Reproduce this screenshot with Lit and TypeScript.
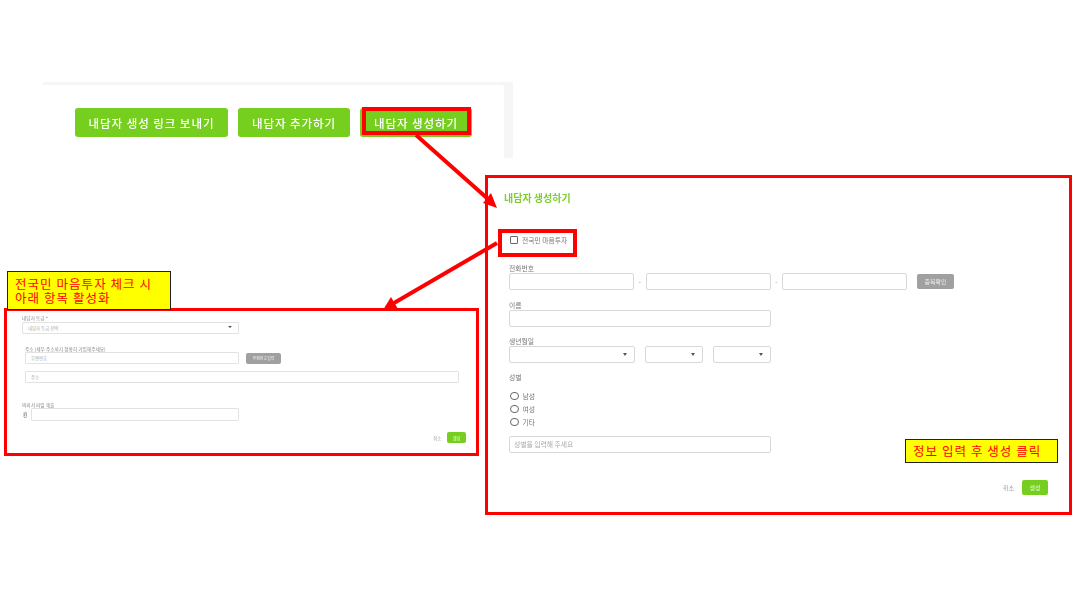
import { LitElement, html, css, svg } from "lit";
import { customElement } from "lit/decorators.js";

@customElement("app-root")
export class AppRoot extends LitElement {
  static styles = css`
    :host { display: block; position: relative; width: 1080px; height: 608px; overflow: hidden; background: #fff;
      font-family: "Noto Sans CJK KR", "Noto Sans", sans-serif; color: #777; }
    * { box-sizing: border-box; }
    .shot { position: absolute; left: 43px; top: 82px; width: 470px; height: 76px; background: #f6f6f6; padding: 3px 9px 0 0; filter: blur(0.3px); }
    .shot-in { height: 100%; background: #fff; border-top-right-radius: 3px; display: flex; gap: 10px; padding: 23px 0 0 32px; align-items: flex-start; }
    .gbtn { height: 29px; background: #76cf1f; border-radius: 3px; color: #fff; font-size: 11.5px; font-weight: 500; letter-spacing: 0.95px;
      display: flex; align-items: center; justify-content: center; }
    .g1 { width: 153px; } .g2 { width: 112px; } .g3 { width: 112px; }
    .redbox { position: absolute; border: 4px solid #f00; }
    .rb1 { left: 362px; top: 107px; width: 109px; height: 28px; }
    .rb2 { left: 498px; top: 229px; width: 79px; height: 28px; }
    .frame { position: absolute; border: 3px solid #f00; background: #fff; }
    .fr { left: 485px; top: 175px; width: 587px; height: 340px; }
    .fl { left: 4px; top: 308px; width: 475px; height: 148px; }
    .body { position: relative; height: 100%; filter: blur(0.4px); }
    .fr .body { padding: 13px 0 0 16px; }
    .fl .body { padding: 4px 0 0 15px; }
    .title { color: #7ccf30; font-size: 10px; font-weight: 700; line-height: 14px; }
    .form { padding-left: 5px; }
    .row { display: flex; align-items: center; }
    .check { margin-top: 30px; padding-left: 1px; height: 10px; gap: 4px; font-size: 6.8px; color: #777; }
    .box { width: 8px; height: 8px; border: 1px solid #666; border-radius: 1px; }
    .lab { display: block; font-size: 6.8px; line-height: 8px; color: #777; }
    .mt1 { margin-top: 19px; } .mt2 { margin-top: 11px; } .mt3 { margin-top: 10px; }
    .inp { display: block; border: 1px solid #d8d8d8; border-radius: 2px; background: #fff; height: 17px; margin-top: 1px; position: relative;
      font-size: 6.8px; color: #aaa; padding-left: 4px; line-height: 15px; }
    .w125 { width: 125px; } .w262 { width: 262px; } .w126 { width: 126px; } .w58 { width: 58px; }
    .dash { width: 11.5px; text-align: center; font-size: 6px; color: #888; }
    .sp10 { margin-left: 10px; }
    .sel::after { content: ""; position: absolute; right: 7px; top: 6px; border: 2.5px solid transparent; border-top: 3px solid #555; }
    .grey { background: #a0a0a0; color: #eee; border-radius: 2px; font-size: 6px; display: flex; align-items: center; justify-content: center; }
    .dup { width: 37px; height: 15px; margin-left: 10px; }
    .radios { margin-top: 10px; display: flex; flex-direction: column; gap: 3.5px; }
    .radio { gap: 4px; font-size: 6.8px; height: 9.5px; padding-left: 1px; }
    .circle { width: 8.5px; height: 8.5px; border: 1px solid #666; border-radius: 50%; }
    .gender { margin-top: 9px; }
    .foot { position: absolute; display: flex; align-items: center; }
    .foot-r { right: 21px; bottom: 17px; gap: 8px; font-size: 6px; color: #999; }
    .sbtn { background: #76cf1f; color: #e8f8d8; border-radius: 2px; display: flex; align-items: center; justify-content: center; }
    .foot-r .sbtn { width: 26px; height: 15px; font-size: 6px; }
    .foot-l { right: 10px; bottom: 10px; gap: 6px; font-size: 4.2px; color: #999; }
    .foot-l .sbtn { width: 19px; height: 11px; font-size: 4.2px; }
    .note { position: absolute; background: #ff0; border: 1px solid #222; color: #f00; font-size: 12.5px; letter-spacing: 1.05px; line-height: 14px; }
    .n1 { left: 7px; top: 271px; width: 164px; height: 39px; padding: 5px 0 0 7px; }
    .n2 { left: 905px; top: 439px; width: 153px; height: 24px; padding: 4px 0 0 7px; }
    .s { font-size: 4.7px; line-height: 6px; color: #888; }
    .s i { color: #e33; font-style: normal; }
    .si { border: 1px solid #e2e2e2; border-radius: 1px; height: 12px; background: #fff; font-size: 4.4px; line-height: 10px; color: #aaa; padding-left: 5px; position: relative; }
    .si.sel::after { right: 6px; top: 3px; border-width: 2px; border-top-width: 2.5px; }
    .w217 { width: 217px; }
    .addr { padding-left: 3px; }
    .w214 { width: 214px; } .w434 { width: 434px; } .w208 { width: 208px; height: 13px; }
    .zip { width: 35px; height: 11px; margin-left: 7px; font-size: 4px; }
    .clip { width: 9px; height: 8px; flex: none; }
    .arrows { position: absolute; left: 0; top: 0; width: 1080px; height: 608px; pointer-events: none; }
  `;

  render() {
    return html`
      <div class="shot"><div class="shot-in">
        <div class="gbtn g1">내담자 생성 링크 보내기</div>
        <div class="gbtn g2">내담자 추가하기</div>
        <div class="gbtn g3">내담자 생성하기</div>
      </div></div>

      <section class="frame fl"><div class="body">
        <div class="s">내담자 등급 <i>*</i></div>
        <div class="si sel w217" style="margin-top:1px">내담자 등급 선택</div>
        <div class="addr">
          <div class="s" style="margin-top:12px">주소 (세부 주소까지 정확히 기입해주세요)</div>
          <div class="row"><div class="si w214">우편번호</div><div class="grey zip">우편번호입력</div></div>
          <div class="si w434" style="margin-top:7px">주소</div>
        </div>
        <div class="s" style="margin-top:19px">의뢰서 파일 제출</div>
        <div class="row">
          <svg class="clip" viewBox="0 0 9 8"><path d="M2 1.5v4a1.2 1.2 0 0 0 2.4 0V2a.8.8 0 0 0-1.6 0v3" fill="none" stroke="#888" stroke-width=".7"/></svg>
          <div class="si w208"></div>
        </div>
        <div class="foot foot-l"><span>취소</span><div class="sbtn">생성</div></div>
      </div></section>

      <section class="frame fr"><div class="body">
        <div class="title">내담자 생성하기</div>
        <div class="form">
          <div class="row check"><span class="box"></span>전국민 마음투자</div>
          <div class="lab mt1">전화번호</div>
          <div class="row">
            <div class="inp w125"></div><span class="dash">-</span>
            <div class="inp w125"></div><span class="dash">-</span>
            <div class="inp w125"></div><div class="grey dup">중복확인</div>
          </div>
          <div class="lab mt2">이름</div>
          <div class="inp w262"></div>
          <div class="lab mt3">생년월일</div>
          <div class="row">
            <div class="inp sel w126"></div>
            <div class="inp sel w58 sp10"></div>
            <div class="inp sel w58 sp10"></div>
          </div>
          <div class="lab mt3">성별</div>
          <div class="radios">
            <div class="row radio"><span class="circle"></span>남성</div>
            <div class="row radio"><span class="circle"></span>여성</div>
            <div class="row radio"><span class="circle"></span>기타</div>
          </div>
          <div class="inp w262 gender">성별을 입력해 주세요</div>
        </div>
        <div class="foot foot-r"><span>취소</span><div class="sbtn">생성</div></div>
      </div></section>

      <div class="redbox rb1"></div>
      <div class="redbox rb2"></div>
      <div class="note n1">전국민 마음투자 체크 시<br />아래 항목 활성화</div>
      <div class="note n2">정보 입력 후 생성 클릭</div>

      <svg class="arrows" viewBox="0 0 1080 608">
        ${svg`<line x1="416" y1="135" x2="488" y2="199" stroke="#f00" stroke-width="4"/>
        <polygon points="497,208 483,203 491,193" fill="#f00"/>
        <line x1="497" y1="243" x2="394" y2="303" stroke="#f00" stroke-width="4"/>
        <polygon points="383,310 391,297 398,309" fill="#f00"/>`}
      </svg>
    `;
  }
}
